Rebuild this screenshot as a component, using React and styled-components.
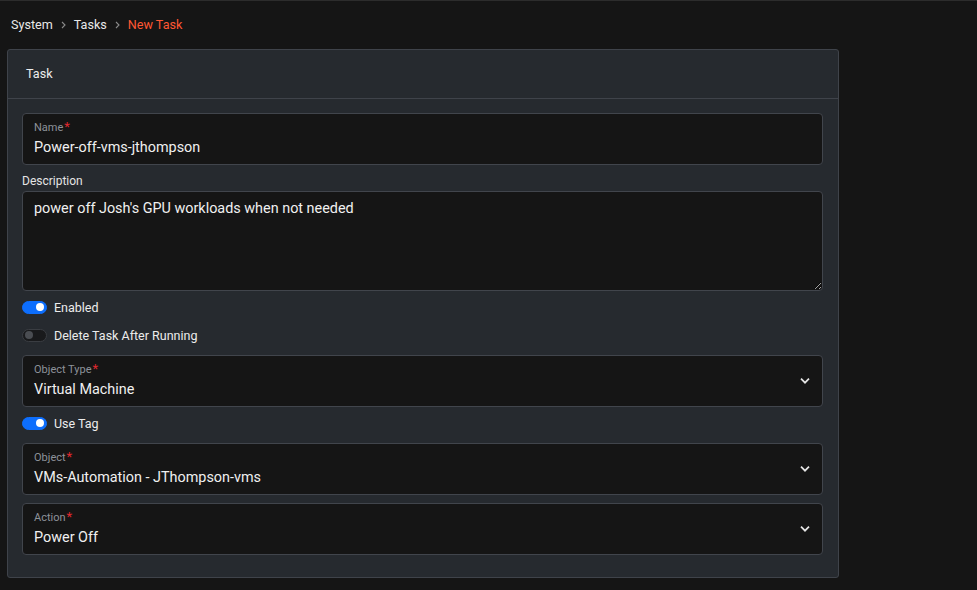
import React from "react";
import styled, { createGlobalStyle } from "styled-components";

const Global = createGlobalStyle`
  html, body { margin: 0; padding: 0; background: #151515; }
  body { font-family: Roboto, "Liberation Sans", Arial, sans-serif; color: #e6e6e6; }
  * { box-sizing: border-box; }
`;

const Page = styled.div`
  min-height: 590px;
  border-top: 1px solid #2c2c2c;
  padding: 0 138px 12px 7px;
`;

const Breadcrumbs = styled.nav`
  display: flex;
  align-items: center;
  height: 48px;
  padding-left: 4px;
  padding-bottom: 1px;
  font-size: 12.6px;
`;

const Crumb = styled.span`
  color: ${(p) => (p.$active ? "#ff5733" : "#e8e8e8")};
`;

const Sep = styled.span`
  display: inline-flex;
  margin: 0 8px 0 8px;
  color: #8a8a8a;
`;

const Card = styled.section`
  background: #262a2f;
  border: 1px solid #3f434a;
  border-radius: 3px;
  width: 832px;
`;

const CardHeader = styled.header`
  height: 49px;
  display: flex;
  align-items: center;
  padding-left: 18px;
  padding-bottom: 2px;
  border-bottom: 1px solid #3f434a;
  font-size: 12.6px;
  color: #ececec;
`;

const CardBody = styled.div`
  display: flex;
  flex-direction: column;
  gap: 8px;
  padding: 14px 15px 22px 14px;
`;

const FieldBox = styled.div`
  position: relative;
  height: 52px;
  background: #151515;
  border: 1px solid #41454c;
  border-radius: 4px;
  padding: 7px 11px 0 11px;
  display: flex;
  flex-direction: column;
`;

const FloatLabel = styled.span`
  font-size: 11px;
  line-height: 14px;
  color: #8d9299;
`;

const Req = styled.span`
  color: #e0282e;
  font-size: 13px;
  line-height: 10px;
  margin-left: 1px;
`;

const Value = styled.span`
  font-size: 14.4px;
  line-height: 20px;
  margin-top: 3px;
  color: #f0f0f0;
`;

const Chevron = styled.span`
  position: absolute;
  right: 12px;
  top: 50%;
  transform: translateY(-50%);
  display: flex;
  color: #e6e6e6;
`;

const Group = styled.div`
  display: flex;
  flex-direction: column;
  gap: 2px;
`;

const PlainLabel = styled.label`
  font-size: 12px;
  line-height: 16px;
  color: #e4e4e4;
`;

const TextArea = styled.textarea`
  height: 100px;
  width: 100%;
  resize: vertical;
  background: #151515;
  border: 1px solid #41454c;
  border-radius: 4px;
  padding: 8px 11px;
  font-family: inherit;
  font-size: 14.4px;
  line-height: 18px;
  color: #f0f0f0;
  color-scheme: dark;
  outline: none;
  display: block;
`;

const ToggleRow = styled.label`
  display: flex;
  align-items: center;
  gap: 7px;
  height: 28px;
  margin: -6px 0 -2px;
  font-size: 12.5px;
  color: #ececec;
`;

const Track = styled.span`
  position: relative;
  width: 25px;
  height: 13px;
  border-radius: 7px;
  background: ${(p) => (p.$on ? "#0d6efd" : "#191a1c")};
  border: 1px solid ${(p) => (p.$on ? "#0d6efd" : "#3a3d42")};
  &::after {
    content: "";
    position: absolute;
    top: 1.5px;
    left: ${(p) => (p.$on ? "13px" : "2px")};
    width: 8px;
    height: 8px;
    border-radius: 50%;
    background: ${(p) => (p.$on ? "#ffffff" : "#4a4d52")};
  }
`;

const ChevronDown = () => (
  <svg width="10" height="7" viewBox="0 0 10 7" fill="none">
    <path d="M1 1.2l4 4 4-4" stroke="currentColor" strokeWidth="1.7" />
  </svg>
);

const ChevronRight = () => (
  <svg width="5" height="8" viewBox="0 0 5 8" fill="none">
    <path d="M1 1l3 3-3 3" stroke="currentColor" strokeWidth="1.1" />
  </svg>
);

const Field = ({ label, value, select }) => (
  <FieldBox>
    <FloatLabel>
      {label}
      <Req>*</Req>
    </FloatLabel>
    <Value>{value}</Value>
    {select && (
      <Chevron>
        <ChevronDown />
      </Chevron>
    )}
  </FieldBox>
);

const Toggle = ({ on, children }) => (
  <ToggleRow>
    <Track $on={on} />
    {children}
  </ToggleRow>
);

export default function App() {
  return (
    <>
      <Global />
      <Page>
        <Breadcrumbs>
          <Crumb>System</Crumb>
          <Sep>
            <ChevronRight />
          </Sep>
          <Crumb>Tasks</Crumb>
          <Sep>
            <ChevronRight />
          </Sep>
          <Crumb $active>New Task</Crumb>
        </Breadcrumbs>
        <Card>
          <CardHeader>Task</CardHeader>
          <CardBody>
            <Field label="Name" value="Power-off-vms-jthompson" />
            <Group>
              <PlainLabel>Description</PlainLabel>
              <TextArea
                readOnly
                defaultValue="power off Josh's GPU workloads when not needed"
              />
            </Group>
            <Toggle on>Enabled</Toggle>
            <Toggle>Delete Task After Running</Toggle>
            <Field label="Object Type" value="Virtual Machine" select />
            <Toggle on>Use Tag</Toggle>
            <Field label="Object" value="VMs-Automation - JThompson-vms" select />
            <Field label="Action" value="Power Off" select />
          </CardBody>
        </Card>
      </Page>
    </>
  );
}
